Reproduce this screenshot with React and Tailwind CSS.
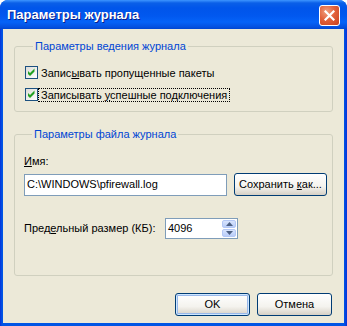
import React from "react";

function Check() {
  return (
    <div className="w-[13px] h-[13px] border border-[#1c5180] bg-[linear-gradient(135deg,#dcdcd7_0%,#ffffff_100%)] flex items-center justify-center shrink-0">
      <svg width="11" height="11" viewBox="0 0 11 11">
        <path d="M2 4 L4 6 L8.5 1.5 L8.5 4.5 L4 9 L2 7 Z" fill="#21a121" />
      </svg>
    </div>
  );
}

function XpButton({ children, className = "", def = false }) {
  return (
    <div
      className={
        "h-[23px] rounded-[3px] border border-[#003c74] bg-[linear-gradient(to_bottom,#ffffff_0%,#f4f3ee_60%,#d6d0c5_100%)] flex items-center justify-center text-black " +
        (def ? "shadow-[inset_0_0_0_1px_#cee7ff,inset_0_0_0_2px_#98b8ea] " : "") +
        className
      }
    >
      <span>{children}</span>
    </div>
  );
}

export default function App() {
  return (
    <div className="w-[347px] h-[326px] bg-white font-['Liberation_Sans',Arial,sans-serif] text-[11px] leading-[13px] text-black">
      <div className="w-full h-full flex flex-col rounded-t-[8px] overflow-hidden bg-[linear-gradient(to_right,#0831d9_0px,#0055e5_2px,#0055e5_344px,#0831d9_347px)]">
        {/* Title bar */}
        <div className="h-[29px] shrink-0 flex items-center justify-between pl-[7px] pr-[7px] bg-[linear-gradient(to_bottom,#3d95ff_0px,#0a5fe8_3px,#0055ea_8px,#0158ef_16px,#0563f8_22px,#0451e0_27px,#0046d0_29px)]">
          <span className="text-white font-bold text-[13px] leading-[16px] [text-shadow:1px_1px_0_#0a1e8a] pt-[1px]">
            Параметры журнала
          </span>
          <div className="w-[21px] h-[21px] rounded-[3px] border border-white bg-[radial-gradient(circle_at_35%_30%,#f0a080_0%,#e2623c_45%,#c7401d_100%)] flex items-center justify-center mt-[1px]">
            <svg width="11" height="11" viewBox="0 0 11 11">
              <path d="M1.5 1.5 L9.5 9.5 M9.5 1.5 L1.5 9.5" stroke="white" strokeWidth="2.2" strokeLinecap="square" />
            </svg>
          </div>
        </div>

        {/* Client area */}
        <div className="flex-1 mx-[3px] mb-[3px] bg-[#ece9d8] flex flex-col px-[11px]">
          {/* Group 1 */}
          <fieldset className="mt-[10px] border border-[#d0d0bf] rounded-[3px] pl-[10px] pr-[10px] pb-[10px]">
            <legend className="ml-[8px] px-[2px] text-[#0046d5] leading-[14px]">
              Параметры ведения журнала
            </legend>
            <div className="flex flex-col gap-[9px] mt-[13px]">
              <div className="flex items-center h-[13px]">
                <Check />
                <span className="border border-transparent px-[2px] leading-[12px]">
                  Запис<u>ы</u>вать пропущенные пакеты
                </span>
              </div>
              <div className="flex items-center h-[13px]">
                <Check />
                <span className="border border-dotted border-black px-[2px] leading-[12px]">
                  Записывать <u>у</u>спешные подключения
                </span>
              </div>
            </div>
          </fieldset>

          {/* Group 2 */}
          <fieldset className="mt-[15px] h-[149px] border border-[#d0d0bf] rounded-[3px] pl-[9px] pr-[5px]">
            <legend className="ml-[8px] px-[2px] text-[#0046d5] leading-[14px]">
              Параметры файла журнала
            </legend>
            <div className="mt-[14px]">
              <u>И</u>мя:
            </div>
            <div className="flex items-center gap-[7px] mt-[5px]">
              <div className="w-[203px] h-[22px] border border-[#7f9db9] bg-white flex items-center pl-[2px]">
                <span>C:\WINDOWS\pfirewall.log</span>
              </div>
              <XpButton className="w-[93px]">
                Сохранить <u>к</u>ак...
              </XpButton>
            </div>
            <div className="flex items-center mt-[22px]">
              <span className="w-[141px]">
                Пред<u>е</u>льный размер (КБ):
              </span>
              <div className="w-[73px] h-[21px] border border-[#7f9db9] bg-white flex items-stretch">
                <div className="flex-1 flex items-center pl-[2px]">
                  <span>4096</span>
                </div>
                <div className="w-[16px] flex flex-col p-[1px] gap-[1px]">
                  <div className="flex-1 rounded-[2px] bg-[linear-gradient(to_bottom,#d8e4fd_0%,#b9cdf9_100%)] border border-[#b4c8f6] flex items-center justify-center">
                    <svg width="7" height="4" viewBox="0 0 7 4">
                      <path d="M0 4 L3.5 0 L7 4 Z" fill="#4d6185" />
                    </svg>
                  </div>
                  <div className="flex-1 rounded-[2px] bg-[linear-gradient(to_bottom,#d8e4fd_0%,#b9cdf9_100%)] border border-[#b4c8f6] flex items-center justify-center">
                    <svg width="7" height="4" viewBox="0 0 7 4">
                      <path d="M0 0 L3.5 4 L7 0 Z" fill="#4d6185" />
                    </svg>
                  </div>
                </div>
              </div>
            </div>
          </fieldset>

          {/* Buttons */}
          <div className="flex justify-end gap-[7px] mt-[17px] pr-[1px]">
            <XpButton def className="w-[75px]">OK</XpButton>
            <XpButton className="w-[75px]">Отмена</XpButton>
          </div>
        </div>
      </div>
    </div>
  );
}
